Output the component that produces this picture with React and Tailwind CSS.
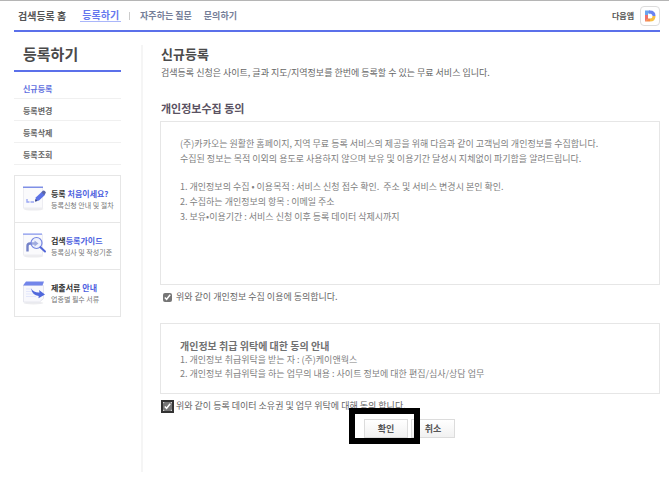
import React, { useState } from 'react'
import clsx from 'clsx'

const MENU = ['신규등록', '등록변경', '등록삭제', '등록조회']

const GUIDES = [
  { icon: PencilIcon, dark: '등록 ', blue: '처음이세요?', sub: '등록신청 안내 및 절차' },
  { icon: SearchIcon, dark: '검색', blue: '등록가이드', sub: '등록심사 및 작성기준' },
  { icon: PapersIcon, dark: '제출서류 ', blue: '안내', sub: '업종별 필수 서류' },
]

function PencilIcon() {
  return (
    <svg width="24" height="26" viewBox="0 0 24 26" className="shrink-0">
      <ellipse cx="10.5" cy="23" rx="10" ry="1.6" fill="#ececef" />
      <rect x="0.5" y="1.5" width="19" height="20.5" fill="#fafafc" stroke="#ededf2" />
      <rect y="0.5" width="20" height="1.5" fill="#7f8fe6" />
      <path d="M4 13v3h2.500M7.500 16h3.500" fill="none" stroke="#9aa7f2" strokeWidth="1.4" />
      <path d="M12 15.500l1-4.200 6.200-5.800 3 3.200-6.200 5.800z" fill="#5c72e6" />
      <path d="M18.400 6.200l1.500-1.400q1-.7 1.900.2l.8.9q.6.9-.2 1.700l-1.400 1.300z" fill="#5a66a8" />
      <path d="M12 15.500l.6-2.400 1.800 1.800z" fill="#3a4270" />
    </svg>
  )
}

function SearchIcon() {
  return (
    <svg width="24" height="26" viewBox="0 0 24 26" className="shrink-0">
      <ellipse cx="10.5" cy="23" rx="10" ry="1.6" fill="#ececef" />
      <rect x="0.5" y="1.5" width="19" height="20.5" fill="#fafafc" stroke="#ededf2" />
      <rect y="0.5" width="19" height="1.2" fill="#8293ee" />
      <path d="M4.500 18.500v-5.500q0-2.500 2.500-2.500h5" fill="none" stroke="#7482c8" strokeWidth="2.400" />
      <path d="M11.500 7.500l4 3-4 3z" fill="#7482c8" />
      <circle cx="13.500" cy="10" r="5.500" fill="#dfe5ff" fillOpacity="0.4" stroke="#7485e0" strokeWidth="1.200" />
      <path d="M17.500 14.200l4.500 4.300" stroke="#5267d8" strokeWidth="2" strokeLinecap="round" />
    </svg>
  )
}

function PapersIcon() {
  return (
    <svg width="24" height="26" viewBox="0 0 24 26" className="shrink-0">
      <ellipse cx="10.5" cy="23" rx="10" ry="1.4" fill="#ececef" />
      <path d="M.5 5.500H20.500v13l-4 3.500H.5z" fill="#f8f8fc" stroke="#e6e7ef" />
      <path d="M3 1.500h18L19.500 5.500H0z" fill="#7285ea" />
      <path d="M3 9h6M3 11.500h7M3 14h9M3 16.500h10" stroke="#e3e7fb" />
      <path d="M8 8.500q3 4.300 8.500 3.900l-.5-2.400 6 4.600-6.500 3.700.2-2.400Q9.500 15.500 8 8.500z" fill="#5068dc" />
    </svg>
  )
}

function DaumIcon() {
  return (
    <svg width="12" height="12" viewBox="0 0 12 12">
      <path d="M1 .5h5V3.500H4v2.500H1z" fill="#6aa3ee" />
      <path d="M5 .5h1q5.500 0 5.500 5.500H8.500Q8.500 3.500 5 3.500z" fill="#6a83f0" />
      <path d="M1 5h3v3.500l-3 3z" fill="#f0706c" />
      <path d="M1 11.500L4 8.500h2v3z" fill="#f58a4b" />
      <path d="M6 11.500V8.500q2.500 0 2.500-2.500h3q0 5.500-5.500 5.500z" fill="#f7c044" />
    </svg>
  )
}

function Agreement({ id, checked, onChange, focused, children }) {
  return (
    <div className="flex h-3 items-center text-[9px] leading-3 text-[#666]">
      <span className="flex w-4 shrink-0 items-center pl-[3px]">
        <input
          id={id}
          type="checkbox"
          checked={checked}
          onChange={e => onChange(e.target.checked)}
          className={clsx(
            'm-0 size-[9px] accent-[#767676]',
            focused && 'rounded-[2px] outline-2 outline-[#333]',
          )}
        />
      </span>
      <label htmlFor={id}>{children}</label>
    </div>
  )
}

const BUTTON =
  'block h-[19px] w-11 border border-[#dcdcdc] bg-linear-to-b from-white to-[#f1f1f1] text-[9px] leading-4 font-bold text-[#555]'

export default function App() {
  const [privacy, setPrivacy] = useState(true)
  const [consign, setConsign] = useState(true)

  return (
    <div className="border-t border-[#b5b5b5] bg-white pr-[9px] pb-4 pl-3.5 font-['Noto_Sans_CJK_KR',sans-serif] text-[#555]">
      {/* Header */}
      <header className="flex h-[31px] items-center justify-between border-b-2 border-[#5b70ea]">
        <nav className="flex items-center pl-1 font-bold leading-3">
          <a href="#home" className="text-[10px] text-[#555]">검색등록 홈</a>
          <a href="#register" className="ml-3.5 border-b border-[#aab6fa] px-0.5 text-[10px] text-[#6577ee]">
            등록하기
          </a>
          <span className="mr-2.5 ml-2 h-2 w-px bg-[#ccc]" />
          <a href="#faq" className="text-[9px] text-[#757e98]">자주하는 질문</a>
          <a href="#ask" className="ml-3 text-[9px] text-[#757e98]">문의하기</a>
        </nav>
        <a href="#app" className="flex items-center gap-1.5 text-[8px] font-bold text-[#555]">
          다음앱
          <span className="flex size-5 items-center justify-center rounded-sm border border-[#dcdcdc]">
            <DaumIcon />
          </span>
        </a>
      </header>

      <div className="flex pt-[13px]">
        {/* Sidebar */}
        <aside className="mr-5 w-[107px] shrink-0">
          <h2 className="h-[27px] border-b-2 border-[#5b70ea] pl-[9px] text-[15px] leading-[18px] font-bold text-[#4a4a4a]">
            등록하기
          </h2>
          <ul className="pt-[5px]">
            {MENU.map((item, i) => (
              <li key={item} className="h-[22px] border-b border-[#f0f0f0] pt-1 pl-[9px] text-[8px] leading-4 font-bold">
                <a href="#menu" className={i === 0 ? 'text-[#5f70e0]' : 'text-[#666]'}>{item}</a>
              </li>
            ))}
          </ul>
          <ul className="mt-[10px] border border-[#e6e6e6]">
            {GUIDES.map((g, i) => (
              <li key={g.blue} className={clsx(i > 0 && 'border-t border-[#e6e6e6]')}>
                <a href="#guide" className="flex h-[46px] items-center gap-1 pl-2 whitespace-nowrap">
                  <g.icon />
                  <span>
                    <strong className="block text-[8px] leading-3 text-[#333]">
                      {g.dark}
                      <span className="text-[#4c60e0]">{g.blue}</span>
                    </strong>
                    <span className="block text-[7px] leading-[11px] text-[#777]">{g.sub}</span>
                  </span>
                </a>
              </li>
            ))}
          </ul>
        </aside>

        {/* Content */}
        <main className="min-h-[427px] min-w-0 grow border-l-2 border-[#f5f5f5] pl-[17px]">
          <h1 className="pl-px text-[13px] leading-[18px] font-bold text-[#4a4a4a]">신규등록</h1>
          <p className="pt-[3px] pl-px text-[9px] leading-[14px] text-[#666]">
            검색등록 신청은 사이트, 글과 지도/지역정보를 한번에 등록할 수 있는 무료 서비스 입니다.
          </p>

          <h3 className="mt-5 mb-[5px] pl-px text-[11px] leading-4 font-bold text-[#5a5262]">
            개인정보수집 동의
          </h3>
          <section className="min-h-[164px] border border-[#e6e6e6] px-[19px] pt-[14px] text-[9px] leading-[15px] text-[#808080]">
            <p>
              (주)카카오는 원활한 홈페이지, 지역 무료 등록 서비스의 제공을 위해 다음과 같이 고객님의 개인정보를 수집합니다.
              <br />
              수집된 정보는 목적 이외의 용도로 사용하지 않으며 보유 및 이용기간 달성시 지체없이 파기함을 알려드립니다.
            </p>
            <p className="pt-[13px]">
              1. 개인정보의 수집 • 이용목적 : 서비스 신청 접수 확인. &nbsp;주소 및 서비스 변경시 본인 확인.
              <br />
              2. 수집하는 개인정보의 항목 : 이메일 주소
              <br />
              3. 보유•이용기간 : 서비스 신청 이후 등록 데이터 삭제시까지
            </p>
          </section>
          <div className="pt-1.5 pb-5">
            <Agreement id="privacy" checked={privacy} onChange={setPrivacy}>
              위와 같이 개인정보 수집 이용에 동의합니다.
            </Agreement>
          </div>

          <section className="min-h-[71px] border border-[#e6e6e6] px-[19px] pt-[14px] text-[9px] leading-[14px] text-[#808080]">
            <h4 className="text-[10px] leading-[15px] font-bold text-[#707070]">개인정보 취급 위탁에 대한 동의 안내</h4>
            <p>1. 개인정보 취급위탁을 받는 자 : (주)케이앤웍스</p>
            <p>2. 개인정보 취급위탁을 하는 업무의 내용 : 사이트 정보에 대한 편집/심사/상담 업무</p>
          </section>
          <div className="pt-1.5">
            <Agreement id="consign" checked={consign} onChange={setConsign} focused>
              위와 같이 등록 데이터 소유권 및 업무 위탁에 대해 동의 합니다.
            </Agreement>
          </div>

          <div className="mt-[7px] flex justify-center gap-[3px] pr-px">
            <div className="relative">
              <button type="button" className={BUTTON}>확인</button>
              <span className="pointer-events-none absolute -top-[11px] -left-[15px] h-9 w-[71px] border-[6px] border-black" />
            </div>
            <button type="button" className={BUTTON}>취소</button>
          </div>
        </main>
      </div>
    </div>
  )
}
